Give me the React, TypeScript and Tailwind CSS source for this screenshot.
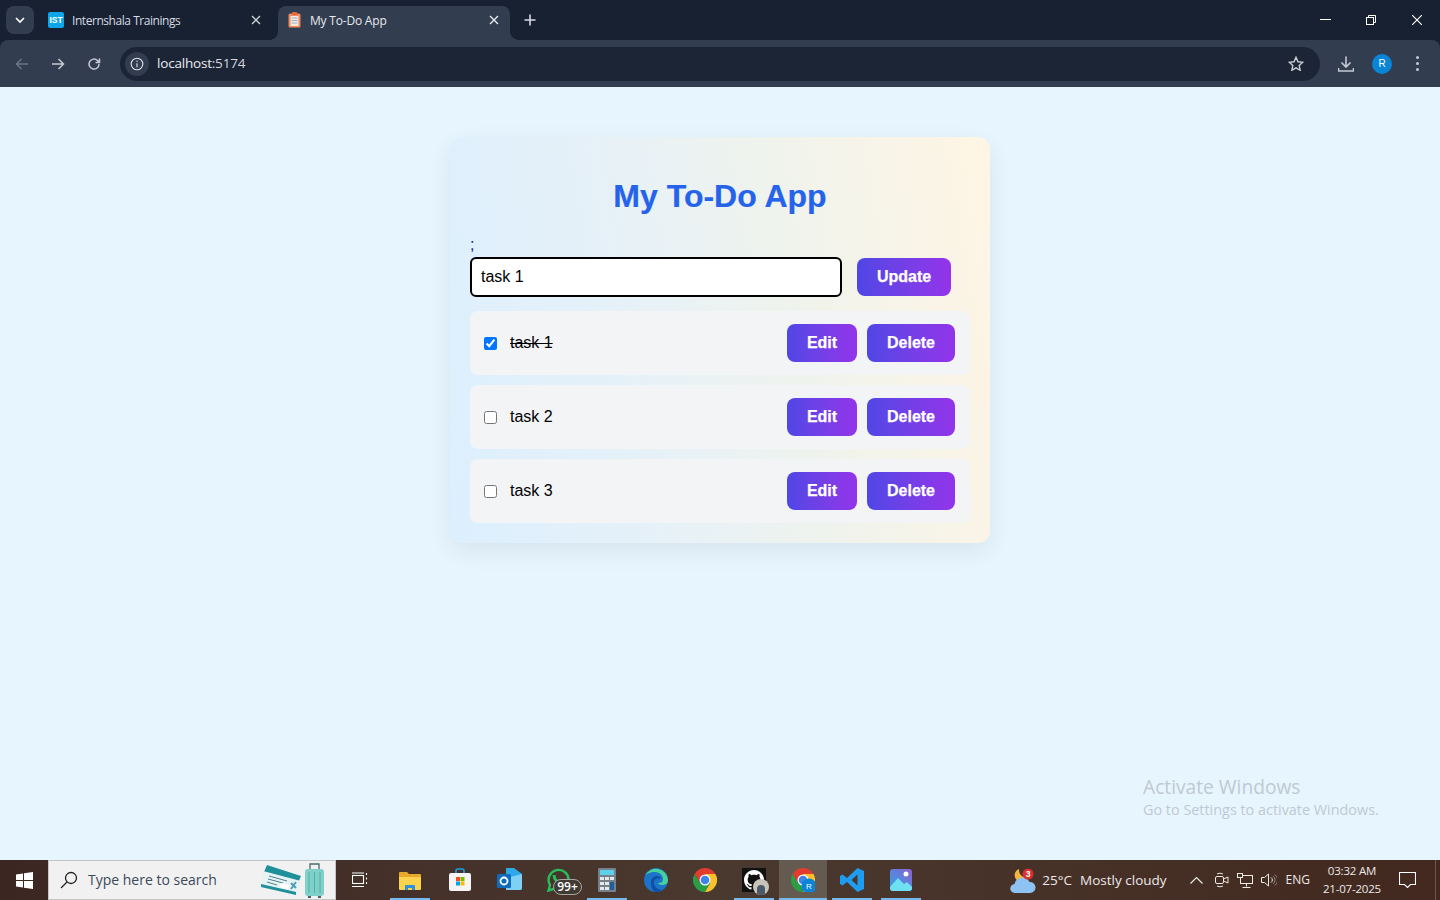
import React from "react";

const sans = "font-['Open_Sans','Noto_Sans',sans-serif]";

function X({ className = "" }: { className?: string }) {
  return (
    <svg width="10" height="10" viewBox="0 0 10 10" className={className} fill="none" stroke="currentColor" strokeWidth="1.4">
      <path d="M1 1l8 8M9 1l-8 8" />
    </svg>
  );
}

function Tabs() {
  return (
    <div className="h-10 shrink-0 bg-[#182132] flex items-start text-[#d5dae3] relative">
      <div className="ml-[6px] mt-[6px] w-[28px] h-[28px] rounded-lg bg-[#333d50] flex items-center justify-center">
        <svg width="10" height="7" viewBox="0 0 10 7" fill="none" stroke="#fff" strokeWidth="1.6"><path d="M1 1l4 4 4-4" /></svg>
      </div>
      <div className="ml-[14px] mt-[6px] w-[226px] h-[28px] flex items-center">
        <div className="w-4 h-4 rounded-[2px] bg-[#0ea5e9] text-white text-[8.500px] font-bold flex items-center justify-center font-['Liberation_Sans',sans-serif]">IST</div>
        <span className={`ml-2 mt-[1px] text-[12px] tracking-[-0.45px] ${sans}`}>Internshala Trainings</span>
        <X className="ml-auto mr-[13px] text-[#c8ced8]" />
      </div>
      <div className="ml-[4px] mt-[6px] w-[232px] h-[34px] rounded-t-lg bg-[#333d50] flex items-start pt-[6px] relative">
        <span className="absolute -left-2 bottom-0 w-2 h-2 bg-[radial-gradient(circle_at_0_0,transparent_7.500px,#333d50_8px)]" />
        <span className="absolute -right-2 bottom-0 w-2 h-2 bg-[radial-gradient(circle_at_100%_0,transparent_7.500px,#333d50_8px)]" />
        <svg width="13" height="16" viewBox="0 0 13 16" className="ml-[10px]">
          <rect x="0.500" y="1.500" width="12" height="14" rx="1.500" fill="#f08a5d" />
          <rect x="2.500" y="4" width="8" height="10" fill="#fbe6da" />
          <rect x="4" y="0" width="5" height="3" rx="1" fill="#e8663a" />
          <path d="M3.500 6h6M3.500 8.500h6M3.500 11h6" stroke="#8db4d8" strokeWidth="1" />
        </svg>
        <span className={`ml-[9px] text-[12px] tracking-[-0.2px] text-[#e6e9ee] ${sans}`}>My To-Do App</span>
        <X className="ml-auto mr-[11px] mt-[3px] text-[#e6e9ee]" />
      </div>
      <svg width="12" height="12" viewBox="0 0 12 12" className="ml-[14px] mt-[14px]" stroke="#d5dae3" strokeWidth="1.600"><path d="M6 0.500v11M0.500 6h11" /></svg>
      <div className="ml-auto flex items-center text-white h-10">
        <svg width="11" height="2" viewBox="0 0 11 2" className="mr-[35px]"><rect width="11" height="1" fill="#fff" /></svg>
        <svg width="10" height="10" viewBox="0 0 10 10" className="mr-[36px]" fill="none" stroke="#fff"><rect x="0.500" y="2.500" width="7" height="7" /><path d="M2.500 2.500v-2h7v7h-2" /></svg>
        <svg width="10" height="10" viewBox="0 0 10 10" className="mr-[18px]" fill="none" stroke="#fff" strokeWidth="1.100"><path d="M0 0l10 10M10 0l-10 10" /></svg>
      </div>
    </div>
  );
}

function Toolbar() {
  return (
    <div className="h-[47px] shrink-0 bg-[#182132]">
      <div className="h-[47px] bg-[#333d50] rounded-t-lg flex items-center relative">
        <svg width="14" height="12" viewBox="0 0 14 12" className="ml-[15px]" fill="none" stroke="#6e7686" strokeWidth="1.500"><path d="M13 6H2M6.500 1L1.500 6l5 5" /></svg>
        <svg width="14" height="12" viewBox="0 0 14 12" className="ml-[22px]" fill="none" stroke="#c5cad4" strokeWidth="1.500"><path d="M1 6h11M7.500 1l5 5-5 5" /></svg>
        <svg width="14" height="14" viewBox="0 0 14 14" className="ml-[22px]" fill="none" stroke="#c5cad4" strokeWidth="1.500"><path d="M12 7a5 5 0 1 1-1.500-3.500L12.500 5.500M12.500 1.500v4h-4" /></svg>
        <div className="ml-[19px] h-[34px] w-[1200px] rounded-full bg-[#1c2536] flex items-center">
          <div className="ml-[5px] w-6 h-6 rounded-full bg-[#333d50] flex items-center justify-center">
            <svg width="14" height="14" viewBox="0 0 14 14" fill="none" stroke="#dfe3ea" strokeWidth="1.100"><circle cx="7" cy="7" r="5.800" /><path d="M7 6.200v4M7 3.800v1.200" /></svg>
          </div>
          <span className={`ml-[8px] text-[13.500px] text-[#e8ebf0] tracking-[-0.2px] ${sans}`}>localhost<span className="text-[#d3d8df]">:5174</span></span>
          <svg width="16" height="15" viewBox="0 0 24 23" className="ml-auto mr-4" fill="none" stroke="#c5cad4" strokeWidth="2.200"><path d="M12 2l3 6.800 7.400.8-5.500 5 1.500 7.300L12 18.200 5.600 21.900l1.500-7.300-5.500-5 7.400-.8z" /></svg>
        </div>
        <svg width="16" height="16" viewBox="0 0 16 16" className="ml-[18px]" fill="none" stroke="#c5cad4" strokeWidth="1.600"><path d="M8 0.500v10M3.500 6.500L8 11l4.500-4.500M0.500 12v3h15v-3" /></svg>
        <div className="ml-[18px] w-5 h-5 rounded-full bg-[#0984d6] text-white text-[10px] flex items-center justify-center font-['Liberation_Sans',sans-serif]">R</div>
        <div className="ml-[24px] flex flex-col gap-[3px]">
          <span className="w-[3px] h-[3px] rounded-full bg-[#c5cad4]" />
          <span className="w-[3px] h-[3px] rounded-full bg-[#c5cad4]" />
          <span className="w-[3px] h-[3px] rounded-full bg-[#c5cad4]" />
        </div>
      </div>
    </div>
  );
}

const btn =
  "h-[38px] rounded-lg bg-gradient-to-r from-[#4f46e5] to-[#9333ea] text-white font-bold text-[16px] [-webkit-text-stroke:0.25px_white] flex items-center justify-center";

function Row({ label, done }: { label: string; done?: boolean }) {
  return (
    <div className="h-16 rounded-lg bg-[#f3f4f6] flex items-center pl-[14px] pr-[15px]">
      <input type="checkbox" defaultChecked={done} className="w-[13px] h-[13px] m-0 mt-[1px]" />
      <span className={`ml-[13px] text-[16px] text-black ${done ? "line-through" : ""}`}>{label}</span>
      <button className={`${btn} ml-auto w-[70px]`}>Edit</button>
      <button className={`${btn} ml-[10px] w-[88px]`}>Delete</button>
    </div>
  );
}

function Card() {
  return (
    <div className="w-[540px] h-[406px] mt-[50px] rounded-xl bg-[linear-gradient(80deg,#dceffe_0%,#e6f1f8_35%,#f0f3ec_65%,#fff5e4_100%)] shadow-[0_8px_24px_rgba(0,0,0,0.07)] px-5 pt-5 font-['Liberation_Sans',sans-serif]">
      <h1 className="h-[78px] pt-[20px] text-center text-[32px] leading-[38px] font-bold text-[#2563eb] [-webkit-text-stroke:0.2px_#2563eb]">My To-Do App</h1>
      <div className="h-[22px] pt-[1px] text-[16px] leading-[18px] text-[#0b2a80]">;</div>
      <div className="flex items-center">
        <input
          readOnly
          value="task 1"
          className="w-[372px] h-10 rounded-md border-2 border-black bg-white px-[9px] text-[16px] text-black outline-none"
        />
        <button className={`${btn} ml-[15px] w-[94px]`}>Update</button>
      </div>
      <div className="mt-[14px] flex flex-col gap-[10px]">
        <Row label="task 1" done />
        <Row label="task 2" />
        <Row label="task 3" />
      </div>
    </div>
  );
}

function Slot({ w, on, active, children }: { w: number; on?: boolean; active?: boolean; children: React.ReactNode }) {
  return (
    <div className={`relative h-10 flex items-center justify-center shrink-0 ${active ? "bg-[#655a50]" : ""}`} style={{ width: w }}>
      {children}
      {on ? <span className="absolute bottom-0 left-1/2 -translate-x-1/2 h-[2px] bg-[#76b9ed]" style={{ width: active ? 48 : 40 }} /> : null}
    </div>
  );
}

function Chrome({ badge }: { badge?: boolean }) {
  return (
    <svg width="24" height="24" viewBox="0 0 24 24">
      <path d="M1.600 6A12 12 0 0 1 22.400 6L12 6 7 15z" fill="#e33b2e" />
      <path d="M1.600 6A12 12 0 0 0 12 24L17.200 15 7 15z" fill="#2a9d47" />
      <path d="M22.400 6A12 12 0 0 1 12 24L17.200 15 12 6z" fill="#fbc02d" />
      <circle cx="12" cy="12" r="5.500" fill="#fff" />
      <circle cx="12" cy="12" r="4.300" fill="#3f83ea" />
      {badge ? <circle cx="18" cy="18" r="7.500" fill="#0984d6" /> : null}
      {badge ? <text x="18" y="21" fontSize="8" fill="#fff" textAnchor="middle" fontFamily="Liberation Sans">R</text> : null}
    </svg>
  );
}

function Taskbar() {
  return (
    <div className={`h-10 shrink-0 flex items-center bg-gradient-to-r from-[#3c2622] via-[#4a392f] to-[#42281f] ${sans}`}>
      <div className="w-12 h-10 flex items-center justify-center shrink-0">
        <svg width="17" height="17" viewBox="0 0 17 17" fill="#fff"><path d="M0 2.500l7-1v6.500H0zM8 1.300L17 0v8H8zM0 9h7v6.500l-7-1zM8 9h9v8l-9-1.300z" /></svg>
      </div>
      <div className="w-[288px] h-10 shrink-0 bg-[#f1f1f1] border border-[#c5c5c5] flex items-center relative">
        <svg width="18" height="18" viewBox="0 0 18 18" className="ml-[11px]" fill="none" stroke="#222" strokeWidth="1.300"><circle cx="11" cy="7" r="5.500" /><path d="M7 11l-6 6" /></svg>
        <span className="ml-[10px] -mt-[1px] text-[14px] text-[#3b4a5a]">Type here to search</span>
        <svg width="76" height="38" viewBox="0 0 76 38" className="absolute right-0 top-0">
          <path d="M8 4L42 15 39 22 5 11z" fill="#1f8f99" />
          <path d="M4 10L42 20 37 34 2 26z" fill="#e6f3f4" />
          <path d="M2 23L37 31 37 34 2 26z" fill="#1f8f99" />
          <path d="M10 15l18 5M9 18l15 4M8 21l10 3" stroke="#51808d" />
          <path d="M22 22l8 2-1 4-8-2z" fill="#fff" />
          <path d="M32 22l5 5M37 21l-5 7" stroke="#4f9fb3" strokeWidth="2" />
          <rect x="46" y="8" width="19" height="27" rx="3" fill="#7fd0c9" />
          <path d="M50 11v21M55.500 11v21M61 11v21" stroke="#55aea8" />
          <path d="M51 8V3h9v5" fill="none" stroke="#4b6a70" strokeWidth="1.300" />
          <rect x="49" y="35" width="3" height="2" fill="#47616a" />
          <rect x="59" y="35" width="3" height="2" fill="#47616a" />
        </svg>
      </div>
      <Slot w={48}>
        <svg width="16" height="16" viewBox="0 0 16 16" fill="none" stroke="#fff" strokeWidth="1.100"><rect x="0.500" y="3.500" width="11" height="8" /><path d="M0 1h12M0 14.500h12M14.500 1v2M14.500 5.500v2M14.500 10v2" /></svg>
      </Slot>
      <Slot w={52} on>
        <svg width="22" height="19" viewBox="0 0 22 19"><path d="M0 2a1 1 0 0 1 1-1h7l2 2h11a1 1 0 0 1 1 1v14H0z" fill="#e8a82c" /><path d="M0 6h22v12a1 1 0 0 1-1 1H1a1 1 0 0 1-1-1z" fill="#fcd34d" /><path d="M6 19v-4a1 1 0 0 1 1-1h8a1 1 0 0 1 1 1v4h-3v-2H9v2z" fill="#2f8fdc" /></svg>
      </Slot>
      <Slot w={48}>
        <svg width="24" height="24" viewBox="0 0 24 24"><path d="M8 5V3a2 2 0 0 1 2-2h4a2 2 0 0 1 2 2v2" fill="none" stroke="#1ba1e2" strokeWidth="1.600" /><rect x="1" y="5" width="22" height="18" rx="2" fill="#f5f5f5" /><rect x="8" y="9" width="4" height="4" fill="#f25022" /><rect x="12.500" y="9" width="4" height="4" fill="#7fba00" /><rect x="8" y="13.500" width="4" height="4" fill="#00a4ef" /><rect x="12.500" y="13.500" width="4" height="4" fill="#ffb900" /></svg>
      </Slot>
      <Slot w={50}>
        <svg width="25" height="24" viewBox="0 0 25 24"><path d="M9 0h8l8 6v14a2 2 0 0 1-2 2H9z" fill="#2fa8e8" /><path d="M9 10l16-4v14a2 2 0 0 1-2 2H9z" fill="#7fd0f5" /><rect x="0" y="6" width="14" height="14" rx="1.500" fill="#0f6cbd" /><circle cx="7" cy="13" r="3.500" fill="none" stroke="#fff" strokeWidth="1.800" /></svg>
      </Slot>
      <Slot w={48}>
        <span className="relative">
          <svg width="24" height="24" viewBox="0 0 24 24" fill="none" stroke="#25c05a" strokeWidth="2.400" className="block"><path d="M2.500 22.500l1.500-5.500A10 10 0 1 1 8 20.800z" /><path d="M8 7c0 4 4 9 9 9" strokeWidth="3" /></svg>
          <span className="absolute left-[7px] top-[11px] h-4 w-[29px] rounded-full bg-[#3f3a34] border border-[#a8a6a2] text-white font-semibold text-[12px] leading-[14px] text-center">99+</span>
        </span>
      </Slot>
      <Slot w={50} on>
        <svg width="18" height="24" viewBox="0 0 18 24"><rect width="18" height="24" rx="1" fill="#76818b" /><rect x="2" y="2" width="14" height="5" fill="#5ed0ec" /><g fill="#e5e8ea"><rect x="2" y="9" width="4" height="3" /><rect x="7" y="9" width="4" height="3" /><rect x="12" y="9" width="4" height="3" /><rect x="2" y="14" width="4" height="3" /><rect x="7" y="14" width="4" height="3" /><rect x="2" y="19" width="4" height="3" /><rect x="7" y="19" width="4" height="3" /></g><rect x="12" y="14" width="4" height="8" fill="#1e5f9e" /></svg>
      </Slot>
      <Slot w={48}>
        <svg width="24" height="24" viewBox="0 0 24 24"><circle cx="12" cy="12" r="12" fill="#1b74c9" /><path d="M1 8A12 12 0 0 1 24 12c0 4-3 5-6 5-2 0-4-1-4-2 3 0 5-1 5-4 0-4-4-7-8-7-5 0-9 2-10 4z" fill="#46d29a" /><path d="M7 14c0-3 2-6 6-6 2 0 4 1 4 3-2-1-7-1-7 4 0 3 3 7 8 7-2 1-4 2-6 2-4-1-5-6-5-10z" fill="#0f4fa8" /></svg>
      </Slot>
      <Slot w={50}>
        <Chrome />
      </Slot>
      <Slot w={48} on>
        <span className="relative w-6 h-6 bg-[#111] flex items-center justify-center">
          <svg width="20" height="20" viewBox="0 0 16 16" fill="#fff"><path d="M8 0C3.580 0 0 3.580 0 8c0 3.540 2.290 6.530 5.470 7.590.4.070.55-.17.55-.38 0-.19-.01-.82-.01-1.490-2.010.37-2.530-.49-2.690-.94-.09-.23-.48-.94-.82-1.130-.28-.15-.68-.52-.01-.53.630-.01 1.080.58 1.230.820.720 1.210 1.870.870 2.330.660.070-.520.280-.870.510-1.070-1.780-.200-3.640-.890-3.640-3.950 0-.870.310-1.590.820-2.150-.080-.200-.360-1.020.080-2.120 0 0 .670-.210 2.200.820.640-.180 1.320-.270 2-.270s1.360.090 2 .270c1.530-1.040 2.200-.820 2.200-.820.440 1.100.160 1.920.080 2.120.510.560.820 1.270.820 2.150 0 3.070-1.870 3.750-3.650 3.950.290.250.540.730.540 1.480 0 1.070-.010 1.930-.010 2.200 0 .210.150.460.550.380A8.010 8.010 0 0 0 16 8c0-4.420-3.580-8-8-8z" /></svg>
          <span className="absolute -right-[3px] -bottom-[3px] w-[16px] h-[16px] rounded-full bg-[#c9c4bb] overflow-hidden flex justify-center items-end">
            <span className="w-2 h-[10px] rounded-t-full bg-[#4a5a6a]" />
          </span>
        </span>
      </Slot>
      <div className="w-px h-10 shrink-0" />
      <Slot w={48} on active>
        <Chrome badge />
      </Slot>
      <Slot w={50} on>
        <svg width="24" height="24" viewBox="0 0 24 24"><path d="M17.500 0L24 3v18l-6.500 3L7 14l-4.500 3.500L0 16V8l2.500-1.500L7 10zM17.500 6.500L11.500 12l6 5.500z" fill="#1f9cf0" /></svg>
      </Slot>
      <Slot w={48} on>
        <svg width="24" height="24" viewBox="0 0 24 24"><defs><linearGradient id="ph" x1="0" y1="1" x2="1" y2="0"><stop offset="0" stopColor="#2aa7e8" /><stop offset="1" stopColor="#8e5fd0" /></linearGradient></defs><rect x="1" y="1" width="22" height="22" rx="3" fill="url(#ph)" /><circle cx="17" cy="6" r="2.500" fill="#fff" /><path d="M1 19l8-9 6 6 3-2 5 5v1a3 3 0 0 1-3 3H4a3 3 0 0 1-3-3z" fill="#6fe0f2" /></svg>
      </Slot>
      <div className="ml-auto flex items-center h-10 text-[#ece9e6]">
        <svg width="26" height="26" viewBox="0 0 26 26">
          <path d="M9 2a6.500 6.500 0 1 0 8 9A8 8 0 0 1 9 2z" fill="#f5b53f" />
          <path d="M5 26a4.500 4.500 0 0 1-.5-9 8 8 0 0 1 15-2 5.500 5.500 0 0 1 1 11z" fill="#8ec2f2" />
          <circle cx="18" cy="7" r="5.500" fill="#d92f2f" />
          <text x="18" y="10" fontSize="8.500" fill="#fff" textAnchor="middle" fontFamily="Liberation Sans" fontWeight="700">3</text>
        </svg>
        <span className="ml-[6px] text-[13.500px]">25°C</span>
        <span className="ml-[8px] text-[13.500px]">Mostly cloudy</span>
        <svg width="13" height="8" viewBox="0 0 13 8" className="ml-[23px]" fill="none" stroke="#ece9e6" strokeWidth="1.200"><path d="M0.500 7.500l6-6 6 6" /></svg>
        <svg width="14" height="16" viewBox="0 0 14 16" className="ml-[12px]" fill="none" stroke="#ece9e6"><rect x="0.500" y="4.500" width="8" height="7" rx="1.500" /><path d="M8.500 7l4.500-2v6l-4.500-2M2 2a6 6 0 0 1 6 0M2 14a6 6 0 0 0 6 0" /></svg>
        <svg width="16" height="15" viewBox="0 0 16 15" className="ml-[8px]" fill="none" stroke="#ece9e6"><rect x="3.500" y="2.500" width="12" height="8" /><rect x="0.500" y="0.500" width="5" height="4" fill="#42301f" /><path d="M9.500 10.500v3M5.500 14.500h8" /></svg>
        <svg width="16" height="14" viewBox="0 0 16 14" className="ml-[8px]" fill="none" stroke="#ece9e6"><path d="M0.500 4.500h3l4-3.500v12l-4-3.500h-3zM10 4.500a3 3 0 0 1 0 5" /><path d="M12 3a5 5 0 0 1 0 8M14 1.500a7 7 0 0 1 0 11" stroke="#8f8782" /></svg>
        <span className="ml-[9px] text-[12px]">ENG</span>
        <div className="ml-[12px] w-[60px] flex flex-col items-center text-[11.500px] leading-[18px] tracking-[-0.2px]">
          <span>03:32 AM</span>
          <span>21-07-2025</span>
        </div>
        <svg width="17" height="16" viewBox="0 0 17 16" className="ml-[17px]" fill="none" stroke="#fff" strokeWidth="1.100"><path d="M0.500 0.500h16v12h-5l-3 3-3-3h-5z" /></svg>
        <span className="ml-[19px] mr-[4px] w-px h-10 bg-[#6a5a52]" />
      </div>
    </div>
  );
}

export default function App() {
  return (
    <div className="h-screen w-full flex flex-col overflow-hidden bg-[#e7f5ff]">
      <Tabs />
      <Toolbar />
      <main className="flex-1 relative flex justify-center">
        <Card />
        <div className={`absolute left-[1143px] top-[687px] text-[#bfc9d0] ${sans}`}>
          <div className="text-[19.200px] leading-[26px]">Activate Windows</div>
          <div className="text-[14.400px] leading-[20px]">Go to Settings to activate Windows.</div>
        </div>
      </main>
      <Taskbar />
    </div>
  );
}
